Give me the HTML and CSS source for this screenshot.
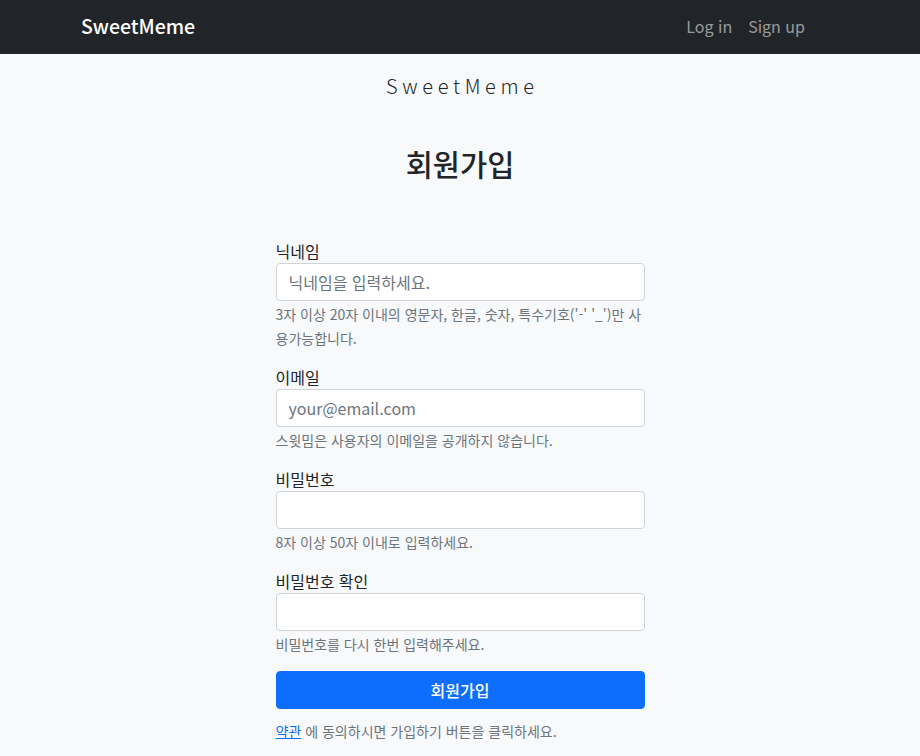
FILE: index.html
```html
<!DOCTYPE html>
<html lang="ko">
<head>
<meta charset="utf-8">
<title>SweetMeme - 회원가입</title>
<link rel="stylesheet" href="styles.css">
</head>
<body>
<nav class="navbar">
  <div class="nav-inner">
    <a class="brand" href="#">SweetMeme</a>
    <div class="nav-links">
      <a class="nav-link" href="#">Log in</a>
      <a class="nav-link" href="#">Sign up</a>
    </div>
  </div>
</nav>
<main class="main">
  <div class="site-title">SweetMeme</div>
  <h1 class="page-title">회원가입</h1>
  <form class="form">
    <div class="group">
      <label class="label">닉네임</label>
      <input class="input" type="text" placeholder="닉네임을 입력하세요.">
      <div class="help">3자 이상 20자 이내의 영문자, 한글, 숫자, 특수기호('-' '_')만 사용가능합니다.</div>
    </div>
    <div class="group">
      <label class="label">이메일</label>
      <input class="input" type="email" placeholder="your@email.com">
      <div class="help">스윗밈은 사용자의 이메일을 공개하지 않습니다.</div>
    </div>
    <div class="group">
      <label class="label">비밀번호</label>
      <input class="input" type="password">
      <div class="help">8자 이상 50자 이내로 입력하세요.</div>
    </div>
    <div class="group">
      <label class="label">비밀번호 확인</label>
      <input class="input" type="password">
      <div class="help">비밀번호를 다시 한번 입력해주세요.</div>
    </div>
    <button class="btn" type="button">회원가입</button>
    <div class="terms"><a href="#">약관</a> 에 동의하시면 가입하기 버튼을 클릭하세요.</div>
  </form>
</main>
</body>
</html>
```
FILE: styles.css
```css
* { box-sizing: border-box; }
body {
  margin: 0;
  background: #f8f9fa;
  color: #212529;
  font-family: "Noto Sans CJK KR", "Noto Sans", sans-serif;
  font-size: 16px;
  line-height: 1.5;
}
.navbar {
  background: #212529;
  height: 54px;
}
.nav-inner {
  height: 100%;
  padding: 0 115px 2px 81px;
  display: flex;
  align-items: center;
  justify-content: space-between;
}
.brand {
  color: #fff;
  text-decoration: none;
  font-size: 19.5px;
  font-weight: 500;
}
.nav-links { display: flex; gap: 16px; }
.nav-link {
  color: rgba(255,255,255,.55);
  text-decoration: none;
  font-size: 16px;
}
.main {
  display: flex;
  flex-direction: column;
  align-items: center;
}
.site-title {
  margin-top: 17px;
  font-size: 20px;
  font-weight: 300;
  letter-spacing: 4.7px;
  padding-left: 4.7px;
}
.page-title {
  margin: 40px 0 0;
  font-size: 29.5px;
  font-weight: 500;
}
.form {
  width: 369px;
  margin-top: 54px;
  display: flex;
  flex-direction: column;
}
.group { margin-bottom: 15px; }
.group:last-of-type { margin-bottom: 13px; }
.label { display: block; margin-bottom: 0; line-height: 24px; }
.input {
  display: block;
  width: 100%;
  height: 38px;
  padding: 6px 12px;
  font: inherit;
  color: #212529;
  background: #fff;
  border: 1px solid #ced4da;
  border-radius: 4px;
}
.input::placeholder { color: #6c757d; }
.help {
  font-size: 14px;
  color: #6c757d;
  line-height: 24px;
  margin-top: 1px;
}
.btn {
  height: 38px;
  background: #0d6efd;
  color: #fff;
  border: 1px solid #0d6efd;
  border-radius: 4px;
  font: inherit;
  font-weight: 500;
}
.terms {
  margin-top: 12px;
  font-size: 14px;
  color: #6c757d;
}
.terms a { color: #0d6efd; }
```
